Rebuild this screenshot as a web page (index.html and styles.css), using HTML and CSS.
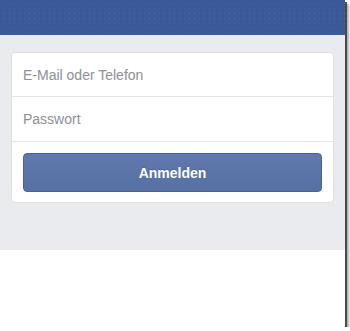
FILE: index.html
```html
<!DOCTYPE html>
<html lang="de">
<head>
<meta charset="utf-8">
<title>Anmelden</title>
<link rel="stylesheet" href="styles.css">
</head>
<body>
<div class="frame">
  <header class="topbar"></header>
  <main class="stage">
    <form class="card">
      <input class="field field-first" type="text" placeholder="E-Mail oder Telefon">
      <input class="field field-second" type="password" placeholder="Passwort">
      <div class="actions">
        <button class="login" type="button">Anmelden</button>
      </div>
    </form>
  </main>
  <div class="rest"></div>
</div>
</body>
</html>
```

FILE: styles.css
```css
html, body {
  margin: 0;
  padding: 0;
  background: #ffffff;
}

body {
  font-family: "Liberation Sans", Arial, sans-serif;
}

.frame {
  width: 345px;
  height: 327px;
  background: #ffffff;
  display: flex;
  flex-direction: column;
  box-shadow: 2px 2px 0 #4a4a4a, 4px 4px 2px #b0b0b0;
  overflow: hidden;
}

.topbar {
  height: 35px;
  flex: none;
  background-color: #3b5998;
  background-image: radial-gradient(circle, rgba(110, 130, 170, 0.3) 0.6px, transparent 1px);
  background-size: 5px 5px;
  background-position: 2px 1px;
}

.stage {
  background: #e9ebee;
  padding: 17px 11px 47px;
}

.card {
  margin: 0;
  background: #ffffff;
  border: 1px solid #dddfe2;
  border-radius: 4px;
  display: flex;
  flex-direction: column;
}

.field {
  display: block;
  box-sizing: border-box;
  width: 100%;
  margin: 0;
  padding: 0 11px;
  border: 0;
  border-bottom: 1px solid #e5e5e5;
  background: transparent;
  font-family: "Liberation Sans", Arial, sans-serif;
  font-size: 14px;
  color: #1d2129;
  outline: none;
}

.field-first {
  height: 44px;
  border-radius: 4px 4px 0 0;
}

.field-second {
  height: 45px;
}

.field::placeholder {
  color: #8d9096;
  opacity: 1;
}

.actions {
  padding: 11px 11px 10px;
}

.login {
  display: block;
  width: 100%;
  height: 39px;
  margin: 0;
  padding: 0;
  border: 1px solid #4a6193;
  border-radius: 4px;
  background: linear-gradient(#6178ab, #5670a5);
  color: #ffffff;
  font-family: "Liberation Sans", Arial, sans-serif;
  font-size: 14px;
  font-weight: bold;
  text-shadow: 0 -1px 0 rgba(0, 0, 0, 0.15);
  cursor: pointer;
}

.rest {
  flex: 1;
  background: #ffffff;
}
```
